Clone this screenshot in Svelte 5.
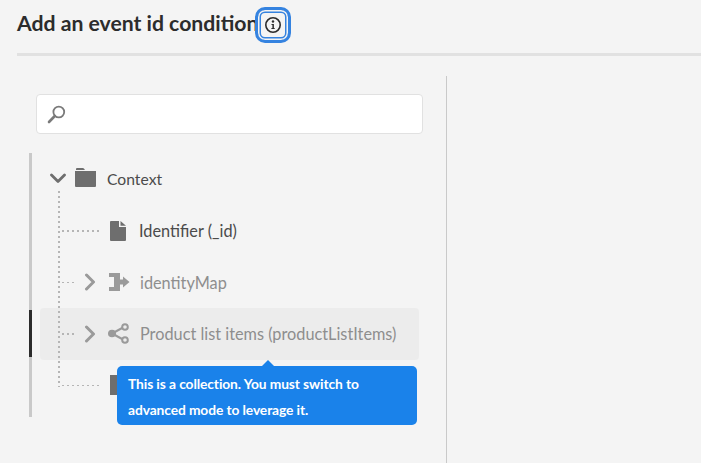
<script>
  const rows = [
    { label: 'Identifier (_id)', dots: 'long', icon: 'file', muted: false },
    { label: 'identityMap', dots: 'short', icon: 'map', muted: true, chevron: true },
    { label: 'Product list items (productListItems)', dots: 'short', icon: 'share', muted: true, chevron: true, active: true },
    { label: '', dots: 'long', icon: 'folder', muted: false }
  ];
</script>

<div class="page">
  <header class="head">
    <h1>Add an event id condition</h1>
    <button class="info" aria-label="Information">
      <svg width="18" height="18" viewBox="0 0 18 18">
        <circle cx="9" cy="9" r="7.200" fill="none" stroke="#2c2c2c" stroke-width="1.600" />
        <circle cx="9" cy="5.500" r="1.200" fill="#2c2c2c" />
        <path d="M7.500 8h2.400v3.900h.8v1.100H7.400v-1.100h1V9.100h-.9z" fill="#2c2c2c" />
      </svg>
    </button>
  </header>
  <div class="rule"></div>

  <div class="body">
    <section class="left">
      <div class="search">
        <svg width="20" height="20" viewBox="0 0 20 20">
          <circle cx="11.800" cy="8" r="5.400" fill="none" stroke="#7a7a7a" stroke-width="1.800" />
          <path d="M7.800 12 2 18" stroke="#7a7a7a" stroke-width="2.600" stroke-linecap="round" />
        </svg>
      </div>

      <div class="tree">
        <span class="active-mark"></span>
        <span class="vline"></span>
        <div class="root">
          <svg class="caret" width="16" height="11" viewBox="0 0 16 11">
            <path d="M1.500 2 8 8.500 14.500 2" fill="none" stroke="#6e6e6e" stroke-width="2.800" stroke-linecap="round" stroke-linejoin="round" />
          </svg>
          <svg class="folder" width="21" height="19" viewBox="0 0 21 19">
            <path d="M1 2V1.200C1 .5 1.500 0 2.200 0h5.600c.6 0 1 .3 1.300.8L10 2zM0 3h21v15a1 1 0 0 1-1 1H1a1 1 0 0 1-1-1z" fill="#6e6e6e" />
          </svg>
          <span class="label">Context</span>
        </div>

        {#each rows as row}
          <div class="row" class:active={row.active} class:muted={row.muted}>
            <span class="hdots" class:long={row.dots === 'long'}></span>
            {#if row.chevron}
              <svg class="chev" width="12" height="18" viewBox="0 0 12 18">
                <path d="M2.500 2 9.500 9 2.500 16" fill="none" stroke="#9a9a9a" stroke-width="3" stroke-linecap="round" stroke-linejoin="round" />
              </svg>
            {/if}
            <span class="icon">
              {#if row.icon === 'file'}
                <svg width="16" height="20" viewBox="0 0 16 20"><path d="M0 1a1 1 0 0 1 1-1h8v6h7v13a1 1 0 0 1-1 1H1a1 1 0 0 1-1-1zM10.500 0 16 4.800h-5.500z" fill="#6e6e6e" /></svg>
              {:else if row.icon === 'map'}
                <svg width="21" height="18" viewBox="0 0 21 18"><path d="M0 0h11v6.500h3V3.500L20.500 9 14 14.500v-3h-3V18H0v-4h5V4H0z" fill="#9a9a9a" /></svg>
              {:else if row.icon === 'share'}
                <svg class="share" width="21" height="21" viewBox="0 0 21 21">
                  <path d="M4 10.500 16 4M4 10.500l12 6.500" stroke="#9a9a9a" stroke-width="2" />
                  <ellipse cx="4" cy="10.500" rx="4" ry="3.800" fill="#9a9a9a" />
                  <circle cx="17" cy="4" r="2.800" fill="#ececec" stroke="#9a9a9a" stroke-width="2" />
                  <circle cx="17" cy="17" r="2.800" fill="#ececec" stroke="#9a9a9a" stroke-width="2" />
                </svg>
              {:else}
                <svg width="16" height="20" viewBox="0 0 16 20"><rect width="16" height="20" fill="#6e6e6e" /></svg>
              {/if}
            </span>
            <span class="label">{row.label}</span>
          </div>
        {/each}

        <div class="tip">
          This is a collection. You must switch to<br />advanced mode to leverage it.
        </div>
      </div>
    </section>
    <section class="right"></section>
  </div>
</div>

<style>
  :global(body) {
    margin: 0;
    background: #f4f4f4;
  }
  .page {
    width: 701px;
    height: 463px;
    overflow: hidden;
    font-family: Lato, 'Open Sans', sans-serif;
    color: #3f3f3f;
    box-sizing: border-box;
    padding-left: 17px;
  }
  .head {
    display: flex;
    align-items: center;
    height: 53px;
    padding-bottom: 3px;
    box-sizing: border-box;
  }
  h1 {
    margin: 0 0 4px;
    font-size: 21.200px;
    font-weight: 700;
    color: #2c2c2c;
    width: 238px;
    white-space: nowrap;
  }
  .info {
    width: 36px;
    height: 36px;
    padding: 0;
    display: flex;
    align-items: center;
    justify-content: center;
    background: #f4f4f4;
    border: 3px solid #3583e0;
    border-radius: 10px;
    box-shadow: inset 0 0 0 1.500px #f4f4f4, inset 0 0 0 3px #3583e0;
    box-sizing: border-box;
    position: relative;
  }
  .rule {
    height: 3px;
    background: #e1e1e1;
    margin-bottom: 20px;
  }
  .body {
    display: flex;
    height: 390px;
  }
  .left {
    box-sizing: border-box;
    border-right: 1px solid #c9c9c9;
    padding: 18px 23px 0 12px;
    width: 430px;
  }
  .search {
    margin-left: 7px;
    height: 40px;
    width: 387px;
    background: #fff;
    border: 1px solid #e1e1e1;
    border-radius: 4px;
    box-sizing: border-box;
    display: flex;
    align-items: center;
    padding-left: 10px;
  }
  .tree {
    position: relative;
    margin-top: 19px;
    width: 398px;
    height: 264px;
    border-left: 3px solid #c9c9c9;
    box-sizing: border-box;
  }
  .active-mark {
    position: absolute;
    left: -3px;
    top: 157px;
    width: 3px;
    height: 47px;
    background: #2c2c2c;
  }
  .vline {
    position: absolute;
    left: 26px;
    top: 38px;
    width: 1.500px;
    height: 196px;
    background: repeating-linear-gradient(to bottom, #b5b5b5 0 2px, transparent 2px 5px);
  }
  .root {
    display: flex;
    align-items: center;
    height: 51px;
    padding-left: 18px;
    margin-bottom: 1px;
  }
  .folder {
    margin: -3px 0 0 9px;
  }
  .root .label {
    margin: 1px 0 0 11px;
    font-size: 15.700px;
  }
  .row {
    display: flex;
    align-items: center;
    height: 51.500px;
    margin-left: 8px;
    margin-right: 8px;
    box-sizing: border-box;
    border-radius: 4px;
  }
  .row.active {
    background: #ececec;
  }
  .hdots {
    width: 14px;
    margin-left: 22px;
    height: 1.500px;
    background: repeating-linear-gradient(to right, #b5b5b5 0 2px, transparent 2px 5px);
    margin-right: 8px;
  }
  .hdots.long {
    width: 40px;
    margin-right: 8px;
  }
  .chev {
    margin-right: 13px;
  }
  .share {
    margin-left: -1px;
  }
  .icon {
    width: 21px;
    display: flex;
    margin-right: 10px;
  }
  .label {
    font-size: 16.300px;
    white-space: nowrap;
    color: #4b4b4b;
  }
  .row:not(.muted) .label {
    margin-left: -2px;
  }
  .muted .label {
    color: #8e8e8e;
  }
  .tip {
    position: absolute;
    left: 85px;
    top: 213px;
    width: 300px;
    height: 59px;
    background: #1a82ea;
    color: #fff;
    border-radius: 5px;
    font-size: 13.800px;
    font-weight: 700;
    line-height: 25.500px;
    padding: 5px 11px;
    box-sizing: border-box;
    white-space: nowrap;
    letter-spacing: -0.100px;
  }
  .tip::before {
    content: '';
    position: absolute;
    left: 145px;
    top: -6px;
    width: 0;
    height: 0;
    border-left: 6px solid transparent;
    border-right: 6px solid transparent;
    border-bottom: 6px solid #1a82ea;
  }
</style>
